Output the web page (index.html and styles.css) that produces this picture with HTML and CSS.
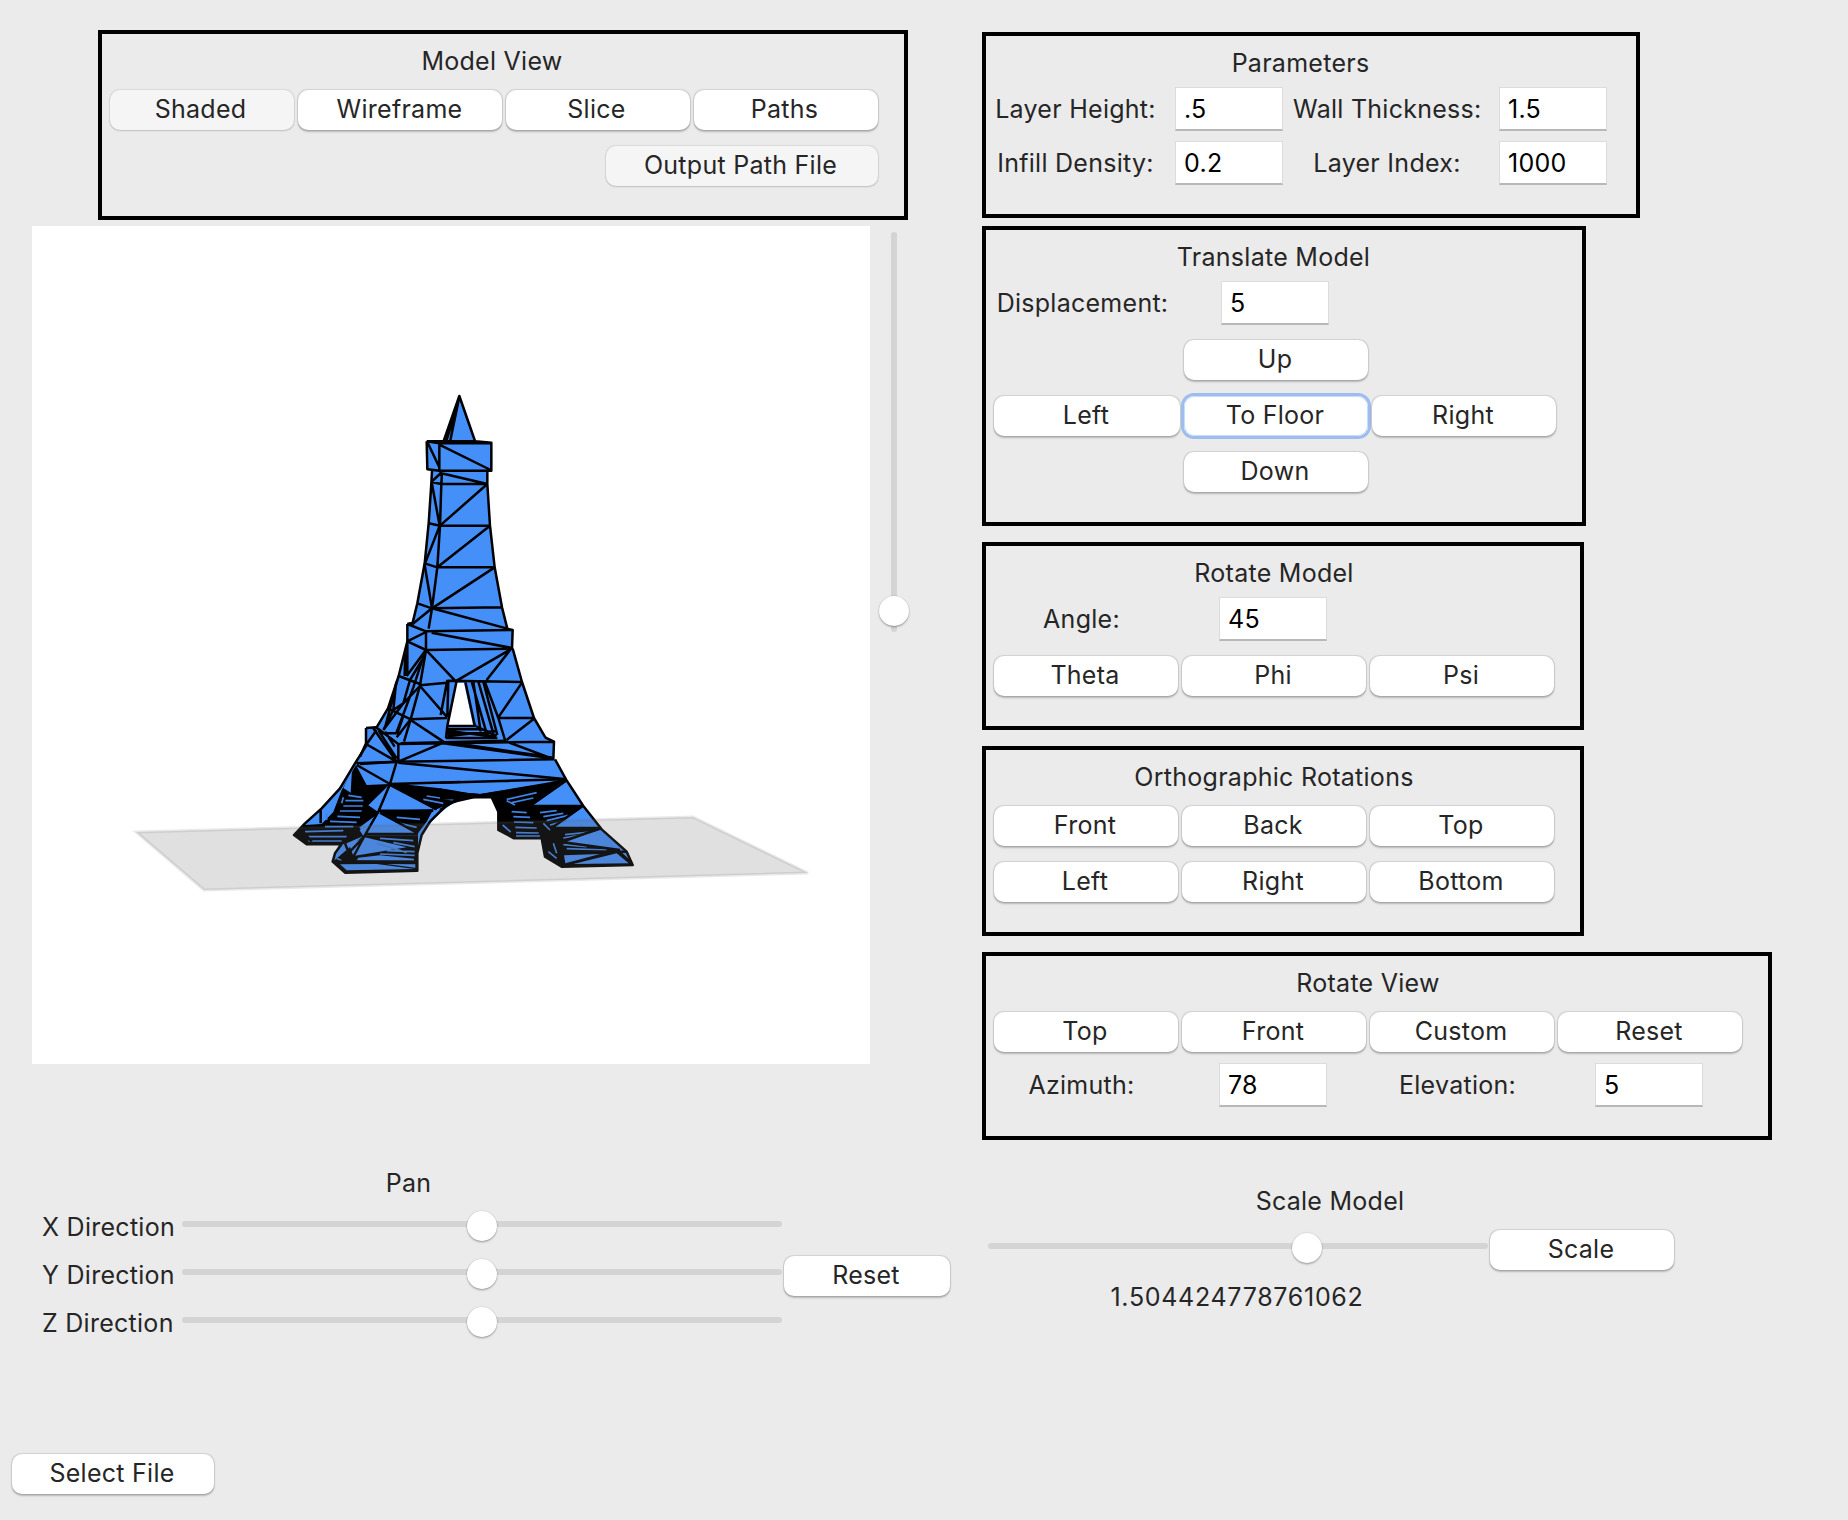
FILE: index.html
```html
<!DOCTYPE html>
<html lang="en">
<head>
<meta charset="utf-8">
<title>Slicer</title>
<link rel="stylesheet" href="styles.css">
</head>
<body>
<main class="app">
  <div class="left">
    <section class="panel model-view">
      <h2 class="title">Model View</h2>
      <div class="row">
        <button class="btn off">Shaded</button>
        <button class="btn wide">Wireframe</button>
        <button class="btn">Slice</button>
        <button class="btn">Paths</button>
      </div>
      <div class="row end"><button class="btn off output">Output Path File</button></div>
    </section>

    <div class="viewer">
      <svg class="canvas" viewBox="32 226 838 838" width="838" height="838">
        <!-- tower silhouette -->
        <path class="body" fill-rule="evenodd" d="M459 396L475 441L491 443V471H487L490 526L495 567L507 629L513 630V649L522 682L534 718L545 737L554 741V759L566 779L583 806L602 829L627 852L632 865L562 867L545 857L542 838L514 839L498 830V812L492 797L473 797L453 803L435 817L422 835L417 853V871L345 873L333 862L336 850L343 838L307 844L294 835L305 823L322 808L340 788L355 763L366 745V728L376 728L388 708L399 676L407 641V623L413 622L417 603L425 563L429 510L432 470H427V441L443 442ZM456 683L448 725L473 725L464 683Z"/>
        <!-- spire and upper shaft -->
        <g class="wire" transform="translate(400 380) scale(.33333)">
          <path d="M130 186L178 48L226 186M178 50L150 186M168 90L138 186M80 184L82 268L118 272H274V188L226 184M80 184L118 190H274M80 184H226M118 190V272M82 186L118 262M118 194L272 270"/>
          <path d="M96 272L94 310L86 430L74 550L52 670L38 728M262 272V312L270 437L284 562L306 682L322 746M126 278L124 312L120 437L112 562L96 685L86 746M94 306L124 312H262M118 278L262 312M126 276L96 304M86 430L120 437H270M74 550L112 562H284M52 670L96 685L306 682"/>
          <path d="M262 312L120 437M270 437L112 562M284 562L96 685L322 746M96 312L118 432M118 440L76 548M74 555L96 685L34 735"/>
        </g>
        <!-- middle section between the two decks -->
        <g class="wire" transform="translate(360 600) scale(.33333)">
          <path d="M142 72V124L198 150L456 146L458 90L440 86M142 72L198 94L458 90M142 72L160 68M198 94V150M215 98L456 144M142 124L198 96"/>
          <path d="M142 124L116 228L84 325L48 385M458 146L486 246L522 354L556 412M198 150L180 256L152 358L132 425M200 152L285 242M452 148L290 242M452 148L380 240M180 256L262 248M262 242L486 246M152 358L262 354M415 354H522M180 258L262 352M152 360L250 425M486 248L415 352M522 356L440 420M415 354L435 420M374 244L415 354M290 242L262 378L258 415M262 240L242 345M265 240L262 350M316 245L345 380M335 245L380 400M340 245L362 395M355 245L400 400M370 245L412 405"/>
          <path d="M262 378H350M262 388H360M260 392L405 410M262 408L410 393M258 414H412M258 400H400M350 380L410 408"/>
          <path d="M142 130V228M136 160L134 228M116 228L180 252M196 152L140 228M196 152L160 262L108 402M186 180L150 240L130 310L70 390M108 250L100 330M112 240L76 380M180 258L130 310L100 330M84 325L152 358M100 330L70 390M152 358L110 412M130 348L112 400M60 400H124"/>
          <path d="M18 384V432L110 485L580 478L582 425L555 412M18 384L48 382L115 432L582 425M115 432V485L245 430M250 430L575 475M300 432L575 472M440 425L575 475M40 385L110 485M56 392L110 475M20 432L50 390M75 395L104 440M18 430L0 470M0 492L110 485M115 488L620 538M122 430L440 422"/>
        </g>
        <!-- left pair of legs -->
        <g transform="translate(280 710) scale(.33333)">
          <path class="dark" d="M228 165L260 225L330 222L265 286L298 308L235 355L250 378L200 400L180 404L80 403L42 375L75 345L125 342L160 306L185 240ZM330 222L540 248V270L500 285L465 300ZM298 302L460 298L440 335L412 372ZM252 376H414V482L195 488L158 455Z"/>
          <path class="face" d="M216 180L190 234L212 248ZM164 262L134 296L158 305ZM84 340L120 338L122 302ZM240 174L322 218L260 222ZM330 232L268 286L296 299L448 297ZM300 314L236 355L256 372L400 372ZM254 382L208 404L220 438L380 412ZM235 443L300 436L402 446V452L230 451ZM180 463L290 462L404 477L200 481ZM320 462L406 463V473Z"/>
          <path class="glint" d="M205 256L245 262M196 272H250M190 288H248M180 303H245M172 319L240 322M150 334L230 337M135 350H220M75 365L190 362M85 380H200M85 393H185M190 262L185 280M140 310V330M440 258L520 270M430 268L490 280M350 322L420 328M360 340L410 352M320 318L400 362M290 400L380 428M300 385L400 392M320 422L404 425M300 432L404 436M340 398L404 410M200 410L205 430M170 445L185 452"/>
          <path class="wire" d="M260 105L225 160L180 235L125 295L75 340L42 375L80 403H185M350 155L330 222L295 305L255 375L215 450M230 160L350 155M230 165L330 222L540 245M330 222L540 216M240 355L190 395L165 430L158 455L195 488L412 482V430L425 375L450 335L500 285L540 268M258 372H414M330 225L470 298M295 302H460M300 308L414 370M60 355L95 395M122 300V340M255 378L195 440M158 455H412M195 400L215 450"/>
        </g>
        <!-- right pair of legs -->
        <g transform="translate(440 710) scale(.33333)">
          <path class="dark" d="M0 235L120 252L378 208L268 288L430 290L340 354L488 358L365 396L560 425L578 465L365 470L315 440L305 385L222 387L175 360V305L155 262L0 270Z"/>
          <path class="face" d="M374 220L280 286H420ZM426 300L350 350L474 354ZM478 366L372 396L526 410ZM0 222L350 216L130 250L90 250L0 234ZM372 436L480 432L376 460ZM400 462L530 430L566 460ZM540 424L562 430L570 450Z"/>
          <path class="glint" d="M200 268L290 248M215 278L280 264M200 272L225 285M215 305L260 308M220 320L270 322M222 336L280 338M226 352L290 354M228 368L296 369M228 378H300M188 345L212 366M300 308L350 302M310 320L370 310M320 332L385 316M330 345L380 332M370 384L440 372M375 374L450 366M370 404L440 410M380 416L500 420M325 425L350 445M340 400L350 430M310 340L330 360"/>
          <path class="wire" d="M345 148L378 208L430 288L485 358L560 425L578 465L365 470L315 440L305 385H222L175 360V305L155 262H100L40 275L0 300M378 208L0 218M0 245L120 256L378 212L270 288H428L335 354H482L365 396L540 420M355 425L560 425M365 432V470M540 428L574 460"/>
        </g>
        <!-- build plate, translucent over the feet -->
        <path class="plate" d="M136 832L693 817L808 873L204 890Z"/>
      </svg>
      <div class="vslider"><span class="thumb"></span></div>
    </div>

    <section class="pan">
      <div class="pan-grid">
        <h2 class="title">Pan</h2>
        <label>X Direction</label><div class="slider"><span class="thumb"></span></div>
        <label>Y Direction</label><div class="slider"><span class="thumb"></span></div>
        <label>Z Direction</label><div class="slider"><span class="thumb"></span></div>
      </div>
      <button class="btn reset">Reset</button>
    </section>

    <button class="btn select">Select File</button>
  </div>

  <div class="right">
    <section class="panel parameters">
      <h2 class="title">Parameters</h2>
      <div class="grid">
        <label>Layer Height:</label><input value=".5"><label>Wall Thickness:</label><input value="1.5">
        <label>Infill Density:</label><input value="0.2"><label>Layer Index:</label><input value="1000">
      </div>
    </section>

    <section class="panel translate">
      <h2 class="title">Translate Model</h2>
      <div class="grid fields"><label>Displacement:</label><input value="5"></div>
      <div class="grid pad">
        <button class="btn up">Up</button>
        <button class="btn side">Left</button><button class="btn focus">To Floor</button><button class="btn">Right</button>
        <button class="btn down">Down</button>
      </div>
    </section>

    <section class="panel rotate-model">
      <h2 class="title">Rotate Model</h2>
      <div class="grid fields"><label>Angle:</label><input value="45"></div>
      <div class="grid buttons"><button class="btn">Theta</button><button class="btn">Phi</button><button class="btn">Psi</button></div>
    </section>

    <section class="panel ortho">
      <h2 class="title">Orthographic Rotations</h2>
      <div class="grid buttons">
        <button class="btn">Front</button><button class="btn">Back</button><button class="btn">Top</button>
        <button class="btn">Left</button><button class="btn">Right</button><button class="btn">Bottom</button>
      </div>
    </section>

    <section class="panel rotate-view">
      <h2 class="title">Rotate View</h2>
      <div class="grid buttons"><button class="btn">Top</button><button class="btn">Front</button><button class="btn">Custom</button><button class="btn">Reset</button></div>
      <div class="grid fields"><label>Azimuth:</label><input value="78"><label>Elevation:</label><input value="5"></div>
    </section>

    <section class="scale">
      <h2 class="title">Scale Model</h2>
      <div class="scale-row">
        <div class="slider"><span class="thumb"></span></div>
        <button class="btn">Scale</button>
      </div>
      <output class="value">1.504424778761062</output>
    </section>
  </div>
</main>
</body>
</html>
```
FILE: styles.css
```css
* { box-sizing: border-box; }

body {
  margin: 0;
  background: #ebebeb;
  color: #262626;
  font: 25px/32px Inter, "Liberation Sans", sans-serif;
  letter-spacing: 0.27px;
}

.app { display: flex; width: 1848px; height: 1520px; overflow: hidden; }
.left { width: 982px; padding-top: 30px; }
.right { flex: 1; padding-top: 32px; }

.panel { border: 4px solid #000; padding: 11px 26px 0 8px; }
.title { margin: 0; font: inherit; text-align: center; white-space: nowrap; }
label { text-align: center; white-space: nowrap; }

.btn {
  width: 184px;
  height: 40px;
  padding: 0 2px 2px 0;
  border: 0;
  border-radius: 10px;
  background: #fff;
  box-shadow: 0 0 1px 0.5px rgba(0, 0, 0, 0.1), 0 1.5px 2px rgba(0, 0, 0, 0.22);
  color: inherit;
  font: inherit;
  letter-spacing: inherit;
  text-align: center;
  white-space: nowrap;
}
.btn.off { background: #f5f5f5; box-shadow: 0 0 1px 0.5px rgba(0, 0, 0, 0.07), 0 1px 2px rgba(0, 0, 0, 0.13); }
.btn.focus { box-shadow: inset 0 0 0 1px #c9dcf7, 0 0 0 3px #9dbdee; }

input {
  width: 108px;
  height: 44px;
  padding: 0 0 0 8px;
  border: 1px solid #dcdcdc;
  border-bottom: 2px solid #b8b8b8;
  border-radius: 0;
  background: #fff;
  color: #000;
  font: inherit;
  letter-spacing: inherit;
  outline: 0;
}

.grid { display: grid; align-items: center; }

/* Model view */
.model-view { width: 810px; height: 190px; margin-left: 98px; }
.model-view .title { padding-right: 4px; }
.row { display: flex; gap: 4px; margin-top: 13px; }
.row.end { justify-content: flex-end; margin-top: 16px; }
.row .btn { padding-right: 3px; }
.row .wide { width: 204px; padding-right: 1px; }
.row .output { width: 272px; }

.viewer { display: flex; margin: 6px 0 0 32px; height: 838px; }
.canvas { display: block; background: #fff; }
.body, .face { fill: #458ff8; }
.dark { fill: #000; }
.wire { fill: none; stroke: #000; stroke-width: 7.5; stroke-linejoin: round; }
.glint { fill: none; stroke: #3f83e4; stroke-width: 5; }
.plate { fill: #646464; fill-opacity: 0.2; stroke: #646464; stroke-opacity: 0.14; stroke-width: 3; }

.thumb {
  position: absolute;
  width: 30px;
  height: 30px;
  border-radius: 50%;
  background: #fff;
  box-shadow: 0 0 1px 0.5px rgba(0, 0, 0, 0.12), 0 1.5px 2px rgba(0, 0, 0, 0.24);
}
.vslider { position: relative; width: 6px; height: 400px; margin: 6px 0 0 21px; border-radius: 3px; background: #d4d4d4; }
.vslider .thumb { left: -12px; top: 364px; }
.slider { position: relative; height: 6px; border-radius: 3px; background: #d4d4d4; }
.slider .thumb { top: -10px; left: calc(50% - 15px); }

/* Pan */
.pan { display: flex; margin: 103px 0 0 42px; }
.pan-grid { display: grid; grid-template-columns: 140px 600px; grid-template-rows: 43px repeat(3, 48px); width: 740px; }
.pan-grid .title { grid-column: 1 / -1; padding-right: 7px; }
.pan-grid label { text-align: left; padding-top: 1px; }
.pan-grid .slider { margin-top: 11px; }
.reset { width: 166px; margin: 89px 0 0 2px; }
.select { display: block; width: 202px; margin: 100px 0 0 12px; }

/* Right-hand panels */
.parameters { width: 658px; height: 186px; padding-right: 29px; }
.parameters .grid { grid-template-columns: 181px 118px 206px 108px; row-gap: 10px; margin-top: 8px; }
.parameters label { padding-right: 18px; }

.translate { width: 604px; height: 300px; margin-top: 8px; }
.translate .title { padding-right: 3px; }
.translate .grid { grid-template-columns: 186px 184px 184px; column-gap: 4px; }
.pad { row-gap: 16px; margin-top: 15px; }
.pad .btn { width: 100%; }
.up, .down { grid-column: 2; }
.side { grid-column: 1; }

.fields { grid-template-columns: repeat(4, 184px); column-gap: 4px; margin-top: 8px; }
.fields label { padding-right: 9px; }
.fields input { justify-self: center; position: relative; left: -1px; }
.buttons { grid-template-columns: repeat(4, 184px); gap: 16px 4px; margin-top: 13px; }

.rotate-model, .ortho { width: 602px; }
.rotate-model .buttons, .ortho .buttons, .rotate-model .fields { grid-template-columns: repeat(3, 184px); }
.rotate-model { height: 188px; margin-top: 16px; }
.rotate-model .buttons { margin-top: 15px; }
.ortho { height: 190px; margin-top: 16px; }
.rotate-view { width: 790px; height: 188px; margin-top: 16px; }
.rotate-view .fields { margin-top: 11px; }

/* Scale */
.scale { width: 692px; margin-top: 45px; padding-left: 6px; }
.scale .title { padding-right: 2px; }
.scale-row { display: flex; gap: 2px; margin-top: 13px; }
.scale .slider { width: 500px; margin-top: 13px; }
.scale .slider .thumb { left: 304px; }
.value { display: block; width: 500px; margin-top: 11px; padding-right: 2px; text-align: center; letter-spacing: 0.7px; }
```
